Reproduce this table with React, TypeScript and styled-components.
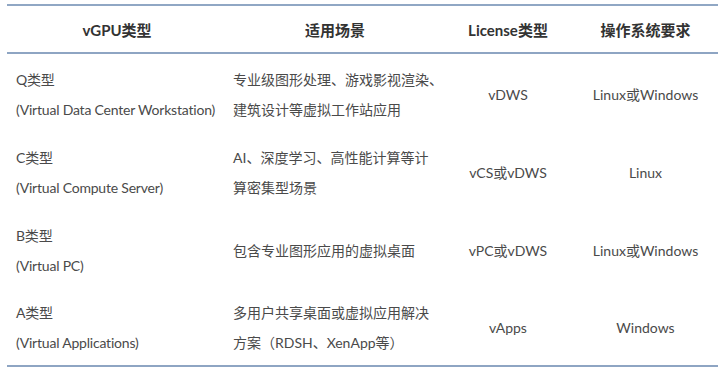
import React from "react";
import styled, { createGlobalStyle } from "styled-components";

const GlobalStyle = createGlobalStyle`
  html, body {
    margin: 0;
    padding: 0;
    background: #ffffff;
  }
  body {
    font-family: Lato, "Noto Sans CJK SC", sans-serif;
    color: #4a4a4a;
  }
`;

type Align = "left" | "center";

type RowType = {
  kind: string;
  full: string;
  scene: string[];
  license: string;
  os: string;
};

const rows: RowType[] = [
  {
    kind: "Q类型",
    full: "(Virtual Data Center Workstation)",
    scene: ["专业级图形处理、游戏影视渲染、", "建筑设计等虚拟工作站应用"],
    license: "vDWS",
    os: "Linux或Windows",
  },
  {
    kind: "C类型",
    full: "(Virtual Compute Server)",
    scene: ["AI、深度学习、高性能计算等计", "算密集型场景"],
    license: "vCS或vDWS",
    os: "Linux",
  },
  {
    kind: "B类型",
    full: "(Virtual PC)",
    scene: ["包含专业图形应用的虚拟桌面"],
    license: "vPC或vDWS",
    os: "Linux或Windows",
  },
  {
    kind: "A类型",
    full: "(Virtual Applications)",
    scene: ["多用户共享桌面或虚拟应用解决", "方案（RDSH、XenApp等）"],
    license: "vApps",
    os: "Windows",
  },
];

const Table = styled.div`
  margin: 4px 5px 0 7px;
  border-top: 2px solid #90a7c4;
  border-bottom: 2px solid #8ea5c3;
`;

const Grid = styled.div`
  display: grid;
  grid-template-columns: 220px 216px 130px 1fr;
`;

const HeadRow = styled(Grid)`
  height: 46px;
  border-bottom: 2px solid #8ea5c3;
  align-items: center;
`;

const HeadCell = styled.div`
  text-align: center;
  font-size: 15px;
  font-weight: 700;
  color: #333333;
`;

const Body = styled.div`
  padding-top: 2px;
`;

const BodyRow = styled(Grid)`
  height: 78px;
  align-items: center;

  &:last-child {
    height: 75px;
  }
`;

const Cell = styled.div<{ $align: Align }>`
  text-align: ${(p) => p.$align};
  padding-left: ${(p) => (p.$align === "left" ? "9px" : "0")};
  font-size: 14px;
  line-height: 30px;
  white-space: nowrap;
`;

const TypeCell = styled(Cell)`
  letter-spacing: -0.2px;
`;

const SceneCell = styled(Cell)`
  padding-left: 6px;
`;

export default function App() {
  return (
    <>
      <GlobalStyle />
      <Table>
        <HeadRow>
          <HeadCell>vGPU类型</HeadCell>
          <HeadCell>适用场景</HeadCell>
          <HeadCell>License类型</HeadCell>
          <HeadCell>操作系统要求</HeadCell>
        </HeadRow>
        <Body>
          {rows.map((r) => (
            <BodyRow key={r.kind}>
              <TypeCell $align="left">
                <div>{r.kind}</div>
                <div>{r.full}</div>
              </TypeCell>
              <SceneCell $align="left">
                {r.scene.map((line) => (
                  <div key={line}>{line}</div>
                ))}
              </SceneCell>
              <Cell $align="center">{r.license}</Cell>
              <Cell $align="center">{r.os}</Cell>
            </BodyRow>
          ))}
        </Body>
      </Table>
    </>
  );
}
